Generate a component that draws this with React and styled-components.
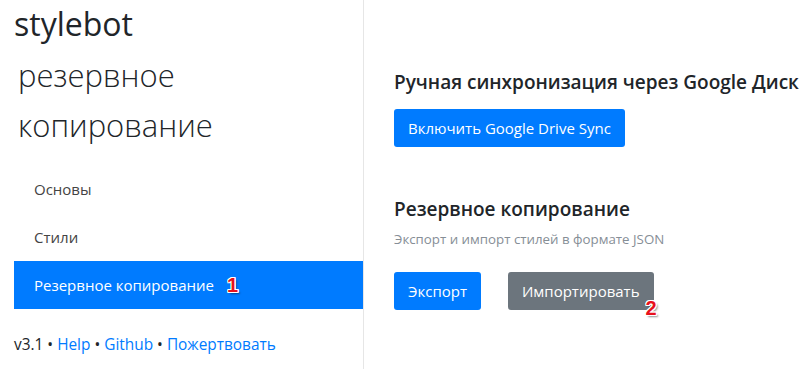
import React from "react"
import styled, { createGlobalStyle } from "styled-components"

const GlobalStyle = createGlobalStyle`
  html, body {
    margin: 0;
    padding: 0;
    background: #fff;
  }
  body {
    font-family: "Open Sans", "Noto Sans", sans-serif;
    color: #212529;
  }
`

const App = () => {
  return (
    <Page>
      <GlobalStyle />
      <Sidebar>
        <Brand>stylebot</Brand>
        <PageTitle>
          резервное
          <br />
          копирование
        </PageTitle>
        <Nav>
          <NavItem>Основы</NavItem>
          <NavItem>Стили</NavItem>
          <NavItem active>
            Резервное копирование
            <Marker style={{ left: "213px", top: "14px" }}>1</Marker>
          </NavItem>
        </Nav>
        <Footer>
          v3.1 • <Link>Help</Link> • <Link>Github</Link> •{" "}
          <Link>Пожертвовать</Link>
        </Footer>
      </Sidebar>

      <Main>
        <Section>
          <Heading>Ручная синхронизация через Google Диск</Heading>
          <ButtonRow>
            <Button>Включить Google Drive Sync</Button>
          </ButtonRow>
        </Section>

        <Section>
          <Heading>Резервное копирование</Heading>
          <Hint>Экспорт и импорт стилей в формате JSON</Hint>
          <ButtonRow gap="27px">
            <Button>Экспорт</Button>
            <Button variant="secondary">
              Импортировать
              <Marker style={{ right: "-3px", bottom: "-8px" }}>2</Marker>
            </Button>
          </ButtonRow>
        </Section>
      </Main>
    </Page>
  )
}

export default App

const Page = styled.div`
  display: grid;
  grid-template-columns: 364px 1fr;
  height: 369px;
  overflow: hidden;
`

const Sidebar = styled.aside`
  border-right: 1px solid #e6e6e6;
  padding: 4px 0 0 14px;
  display: flex;
  flex-direction: column;
`

const Brand = styled.h1`
  margin: 0;
  font-size: 32px;
  font-weight: 400;
  line-height: 40px;
  color: #212529;
`

const PageTitle = styled.h2`
  margin: 6px 0 0 4px;
  font-size: 31px;
  font-weight: 300;
  line-height: 50px;
  color: #212529;
`

const Nav = styled.nav`
  display: flex;
  flex-direction: column;
  margin-top: 15px;
`

const NavItem = styled.div`
  position: relative;
  height: 48px;
  display: flex;
  align-items: center;
  padding-left: 20px;
  font-size: 15px;
  color: ${(p) => (p.active ? "#fff" : "#444")};
  background: ${(p) => (p.active ? "#007bff" : "transparent")};
`

const Marker = styled.span`
  position: absolute;
  font-family: "Liberation Sans", Arial, sans-serif;
  font-weight: 700;
  font-size: 20px;
  line-height: 1;
  color: #e8101c;
  text-shadow: -1px -1px 0 #fff, 1px -1px 0 #fff, -1px 1px 0 #fff,
    1px 1px 0 #fff, 0 -1px 0 #fff, 0 1px 0 #fff, -1px 0 0 #fff, 1px 0 0 #fff,
    2px 2px 2px rgba(0, 0, 0, 0.45);
`

const Footer = styled.div`
  margin-top: 25px;
  font-size: 15.4px;
  color: #212529;
`

const Link = styled.a`
  color: #007bff;
  text-decoration: none;
`

const Main = styled.main`
  padding: 67px 0 0 30px;
  display: flex;
  flex-direction: column;
  gap: 47px;
`

const Section = styled.section`
  display: flex;
  flex-direction: column;
`

const Heading = styled.h3`
  margin: 0 0 12px;
  font-size: 19px;
  font-weight: 600;
  line-height: 30px;
  color: #212529;
`

const Hint = styled.p`
  margin: -6px 0 24px;
  font-size: 13.3px;
  color: #868e96;
`

const ButtonRow = styled.div`
  display: flex;
  gap: ${(p) => p.gap || "10px"};
`

const Button = styled.button`
  position: relative;
  height: 38px;
  padding: 0 14px;
  border: none;
  border-radius: 3px;
  font-family: inherit;
  font-size: 15px;
  color: #fff;
  background: ${(p) => (p.variant === "secondary" ? "#6c757d" : "#007bff")};
`
